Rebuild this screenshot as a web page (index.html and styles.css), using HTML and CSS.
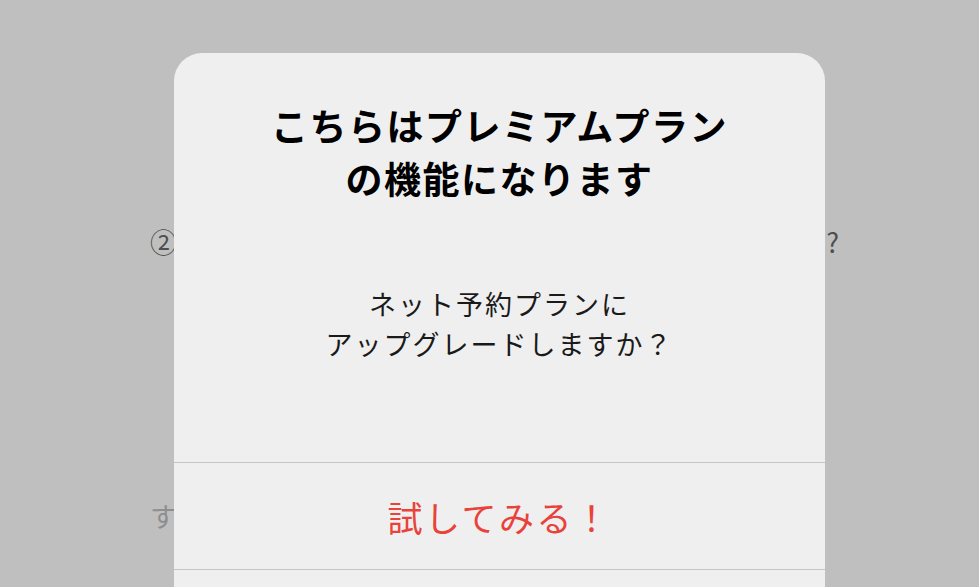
FILE: index.html
```html
<!DOCTYPE html>
<html lang="ja">
<head>
<meta charset="utf-8">
<title>プレミアムプラン</title>
<link rel="stylesheet" href="styles.css">
</head>
<body>
<div class="screen">
  <div class="page">
    <div class="bg-line bg-line-q"><span>②</span><span>?</span></div>
    <div class="bg-line bg-line-s"><span>す</span><span>。</span></div>
  </div>
  <div class="dialog">
    <div class="dialog-body">
      <h1 class="dialog-title">こちらはプレミアムプラン<br>の機能になります</h1>
      <p class="dialog-message">ネット予約プランに<br>アップグレードしますか？</p>
    </div>
    <button class="dialog-btn dialog-btn-primary">試してみる！</button>
    <div class="dialog-rest"></div>
  </div>
</div>
</body>
</html>
```

FILE: styles.css
```css
html, body {
  margin: 0;
  padding: 0;
}
body {
  width: 979px;
  height: 587px;
  overflow: hidden;
  background: #bfbfbf;
  font-family: "Noto Sans CJK JP", "Noto Sans", sans-serif;
}
.screen {
  position: relative;
  width: 979px;
  height: 587px;
}
.page {
  display: flex;
  flex-direction: column;
  padding: 222px 140px 0 150px;
}
.bg-line {
  display: flex;
  justify-content: space-between;
  font-size: 27px;
  line-height: 40px;
}
.bg-line-q {
  color: #4e4e4e;
}
.bg-line-s {
  color: #8e8e8e;
  margin-top: 234px;
  padding-right: 4px;
}
.dialog {
  position: absolute;
  left: 174px;
  top: 53px;
  width: 651px;
  height: 600px;
  background: #efefef;
  border-radius: 28px;
  display: flex;
  flex-direction: column;
  overflow: hidden;
}
.dialog-body {
  height: 410px;
  flex: none;
  box-sizing: border-box;
  display: flex;
  flex-direction: column;
  align-items: center;
  text-align: center;
  border-bottom: 1px solid #c6c6c6;
}
.dialog-title {
  margin: 46px 0 0;
  font-size: 37px;
  line-height: 53px;
  font-weight: 700;
  letter-spacing: 1.5px;
  color: #000;
}
.dialog-message {
  margin: 79px 0 0;
  font-size: 27px;
  line-height: 40px;
  font-weight: 400;
  letter-spacing: 2px;
  color: #1a1a1a;
}
.dialog-btn {
  display: block;
  flex: none;
  width: 100%;
  border: 0;
  background: transparent;
  font-family: inherit;
  padding: 0;
  margin: 0;
}
.dialog-btn-primary {
  box-sizing: border-box;
  height: 107px;
  border-bottom: 1px solid #c6c6c6;
  font-size: 35px;
  letter-spacing: 2.5px;
  color: #e9423a;
}
.dialog-rest {
  flex: 1;
}
```
